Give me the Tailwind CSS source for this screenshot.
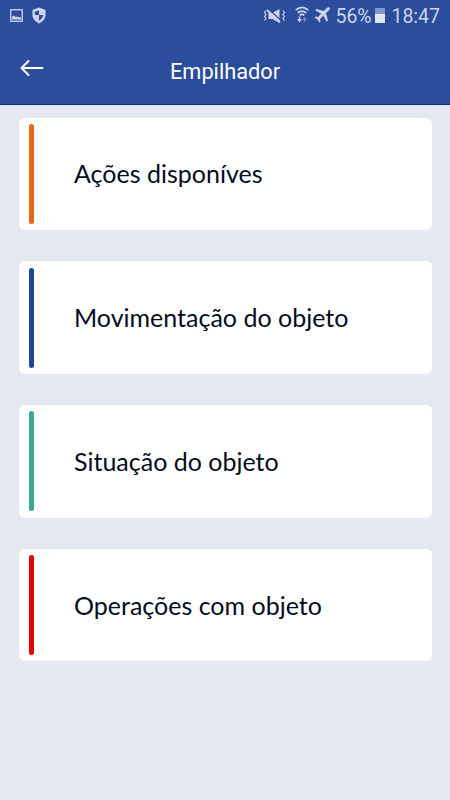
<!DOCTYPE html>
<html lang="pt-BR">
<head>
    <meta charset="UTF-8">
    <meta name="viewport" content="width=device-width, initial-scale=1.0">
    <title>Empilhador</title>
    <script src="https://cdn.jsdelivr.net/npm/@tailwindcss/browser@4"></script>
</head>
<body class="bg-[#e5e8f0] h-screen overflow-hidden">
    <!-- Header -->
    <header class="h-[105px] bg-[#2b4d9b] border-b border-[#052c8b] text-white font-['Roboto',sans-serif]">
        <!-- Status Bar -->
        <div class="flex items-center justify-between h-8 pl-[10px] pr-[10px] text-[#ccd5ec]">
            <div class="flex items-center gap-[9px] pb-px">
                <svg class="w-[13px] h-[13px]" viewBox="0 0 13 13" fill="none">
                    <rect x=".75" y=".75" width="11.5" height="11.5" stroke="currentColor" stroke-width="1.3"/>
                    <path d="M2 10.5V8L4 6.500l1.500 1.500L7.500 7.500 9 8.500l2-.5v2.500z" fill="currentColor"/>
                </svg>
                <svg class="w-[14px] h-[17px]" viewBox="0 0 15 17">
                    <path d="M7.500 0L14.500 2.500V8c0 4-3 7-7 9c-4-2-7-5-7-9V2.500z" fill="currentColor"/>
                    <path d="M7.500 3L3 4.500V8h4.500zM7.500 8H12c-.2 2.500-2 4.500-4.500 6z" fill="#2b4d9b"/>
                </svg>
            </div>
            <div class="flex items-center">
                <svg class="w-[23px] h-4 mr-[9px]" viewBox="0 0 23 16" fill="none">
                    <path d="M5.500 5h4L16.500 1v14L9.500 11h-4z" fill="currentColor"/>
                    <path d="M6 1.500L18 12.500" stroke="#2b4d9b" stroke-width="1.200"/>
                    <path d="M4 2L17 14" stroke="currentColor" stroke-width="1.800"/>
                    <path d="M3 2.500L1.500 4.500l1.500 2-1.500 2 1.500 2-1.500 2M20 2.500l1.500 2-1.500 2 1.500 2-1.500 2 1.500 2" stroke="currentColor" stroke-width="1.200"/>
                </svg>
                <svg class="w-[14px] h-[17px] mr-[5px] mb-[3px]" viewBox="0 0 14 17" fill="none">
                    <path d="M.7 4.200Q7-1.300 13.300 4.200M2.700 6.900Q7 3.200 11.300 6.900M4.700 9.400Q7 7.400 9.300 9.400" stroke="currentColor" stroke-width="1.700"/>
                    <path d="M4.500 10.500v4" stroke="currentColor" stroke-width="1.500"/>
                    <path d="M2 13h5l-2.500 3.500z" fill="currentColor"/>
                    <path d="M7.500 13.500L9.500 11 11.500 13.500H10.200V16H8.800v-2.500z" fill="#7f94c6"/>
                </svg>
                <svg class="w-4 h-4 mr-[5px] mb-[2px]" viewBox="0 0 16 16">
                    <path d="M15.500.5c.7.8.2 2-.7 2.900L12 6.200l2 7.300-1.300 1.300-3.400-6-3.300 3.200.4 2.500-1.100 1.100-1.700-3.200L.4 10.700l1.100-1.100 2.500.4 3.200-3.300-6-3.400L2.500 2l7.300 2L12.600 1.200C13.500.3 14.900-.2 15.500.5z" fill="currentColor"/>
                </svg>
                <span class="text-[19.500px] leading-8 w-[36px] pt-[2px] whitespace-nowrap">56%</span>
                <div class="w-[10px] h-[15px] bg-[#8197ca] ml-1 mr-[6px] mb-[2px] flex items-end">
                    <div class="w-full h-[9px] bg-[#dfe5f3]"></div>
                </div>
                <span class="text-[19.500px] leading-8 pt-[2px] whitespace-nowrap">18:47</span>
            </div>
        </div>
        <!-- Title Bar -->
        <div class="grid grid-cols-[60px_1fr_60px] items-center h-[72px]">
            <a href="#" class="pl-5" aria-label="Voltar">
                <svg class="w-6 h-[18px]" viewBox="0 0 24 18" fill="none" stroke="white" stroke-width="2" stroke-linecap="round" stroke-linejoin="round">
                    <path d="M22.500 9H1.500M8.500 2L1.500 9l7 7"/>
                </svg>
            </a>
            <h1 class="text-[21.750px] leading-7 text-center mt-[7px]">Empilhador</h1>
        </div>
    </header>

    <!-- Options -->
    <main class="flex flex-col gap-[31.250px] pt-[12.500px] pl-[19px] pr-[18px] text-[25px] text-[#050b1c] font-['Lato',sans-serif]">
        <a href="#" class="flex items-center h-[112.500px] bg-white rounded-md pl-[10px]">
            <div class="w-[5px] h-[100px] rounded-sm bg-[#eb6613]"></div>
            <span class="pl-10">Ações disponíves</span>
        </a>
        <a href="#" class="flex items-center h-[112.500px] bg-white rounded-md pl-[10px]">
            <div class="w-[5px] h-[100px] rounded-sm bg-[#204696]"></div>
            <span class="pl-10 pt-px">Movimentação do objeto</span>
        </a>
        <a href="#" class="flex items-center h-[112.500px] bg-white rounded-md pl-[10px]">
            <div class="w-[5px] h-[100px] rounded-sm bg-[#3ba892]"></div>
            <span class="pl-10">Situação do objeto</span>
        </a>
        <a href="#" class="flex items-center h-[112.500px] bg-white rounded-md pl-[10px]">
            <div class="w-[5px] h-[100px] rounded-sm bg-[#e30303]"></div>
            <span class="pl-10 pt-px">Operações com objeto</span>
        </a>
    </main>
</body>
</html>
